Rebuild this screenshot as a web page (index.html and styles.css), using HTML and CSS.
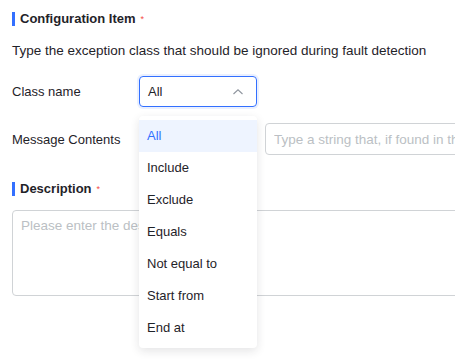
FILE: index.html
```html
<!DOCTYPE html>
<html>
    <head>
        <title>Configuration</title>
        <meta name="viewport" content="width=device-width, initial-scale=1.0">
        <link rel="stylesheet" href="styles.css">
    </head>
<body>
    <div class='page'>
        <h2 class='section-title'>Configuration Item <span class='required'>*</span></h2>
        <p class='hint'>Type the exception class that should be ignored during fault detection</p>

        <div class='form-row'>
            <label class='form-label'>Class name</label>
            <div class='select-wrap'>
                <div class='select select_open'>
                    <span>All</span>
                    <svg class='chevron' width='12' height='12' viewBox='0 0 12 12'>
                        <path d='M1.5 8 L6 3.8 L10.5 8' fill='none' stroke='#8f959e' stroke-width='1.1'/>
                    </svg>
                </div>
                <ul class='dropdown'>
                    <li class='option option_active'>All</li>
                    <li class='option'>Include</li>
                    <li class='option'>Exclude</li>
                    <li class='option'>Equals</li>
                    <li class='option'>Not equal to</li>
                    <li class='option'>Start from</li>
                    <li class='option'>End at</li>
                </ul>
            </div>
        </div>

        <div class='form-row form-row_message'>
            <label class='form-label'>Message Contents</label>
            <div class='message-spacer'></div>
            <input class='input' placeholder='Type a string that, if found in the exception message, will be ignored'>
        </div>

        <h2 class='section-title section-title_desc'>Description <span class='required'>*</span></h2>
        <textarea class='textarea' placeholder='Please enter the description'></textarea>
    </div>
</body>
</html>
```

FILE: styles.css
```css
html {
    font-family: 'Liberation Sans', Arial, sans-serif;
}
body {
    margin: 0;
    background: #fff;
    color: #1f2329;
    min-height: 100vh;
}
.page {
    padding: 12px 0 0 12px;
    width: 443px;
    height: 347px;
    overflow: hidden;
}
.section-title {
    margin: 0;
    font-size: 13px;
    font-weight: 700;
    line-height: 16px;
    border-left: 3px solid #3370ff;
    padding-left: 5px;
    height: 14px;
    display: flex;
    align-items: center;
    gap: 5px;
}
.required {
    color: #f54a45;
    font-size: 9px;
    font-weight: 400;
}
.hint {
    margin: 16px 0 0 0;
    font-size: 13.5px;
    line-height: 18px;
    color: #1f2329;
}
.form-row {
    display: flex;
    align-items: center;
    margin-top: 16px;
    height: 31px;
}
.form-row > * {
    flex-shrink: 0;
}
.form-label {
    width: 127px;
    font-size: 13px;
    color: #1f2329;
}
.select-wrap {
    position: relative;
    width: 118px;
}
.select {
    box-sizing: border-box;
    height: 31px;
    border: 1px solid #3370ff;
    border-radius: 4px;
    box-shadow: 0 0 0 2px rgba(51, 112, 255, 0.1);
    display: flex;
    align-items: center;
    justify-content: space-between;
    padding: 0 12px 0 8px;
    font-size: 13px;
}
.dropdown {
    position: absolute;
    top: 40px;
    left: 0;
    width: 118px;
    margin: 0;
    padding: 4px 0;
    list-style: none;
    background: #fff;
    border-radius: 4px;
    box-shadow: 0 3px 10px rgba(31, 35, 41, 0.12);
    z-index: 2;
}
.option {
    height: 32px;
    line-height: 32px;
    padding-left: 8px;
    font-size: 13px;
    color: #1f2329;
}
.option_active {
    background: #eef4ff;
    color: #3370ff;
}
.form-row_message {
    margin-top: 16px;
    height: 32px;
}
.message-spacer {
    width: 126px;
}
.input {
    box-sizing: border-box;
    width: 280px;
    height: 32px;
    border: 1px solid #d0d3d6;
    border-radius: 4px;
    padding: 0 8px;
    font-family: inherit;
    font-size: 13.5px;
    color: #1f2329;
}
.input::placeholder, .textarea::placeholder {
    color: #bbbfc4;
}
.section-title_desc {
    margin-top: 27px;
}
.textarea {
    display: block;
    box-sizing: border-box;
    margin-top: 14px;
    width: 480px;
    height: 86px;
    border: 1px solid #d0d3d6;
    border-radius: 4px;
    padding: 7px 8px;
    font-family: inherit;
    font-size: 13.5px;
    resize: none;
}
```
